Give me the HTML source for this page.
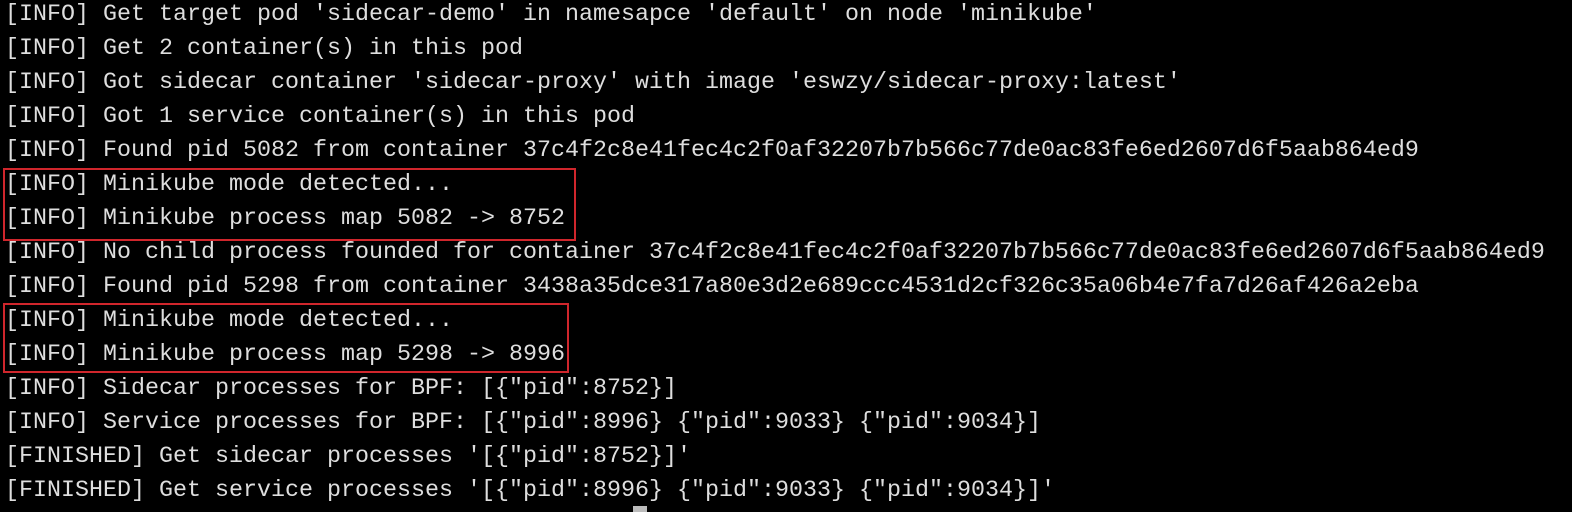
<!DOCTYPE html>
<html><head><meta charset="utf-8"><style>
html,body{margin:0;padding:0;background:#000;width:1572px;height:512px;overflow:hidden;position:relative}
pre{margin:0;position:absolute;left:5px;top:-2px;font-family:"Liberation Mono","DejaVu Sans Mono",monospace;font-size:23.33px;line-height:34px;color:#dedede;white-space:pre}
.box{position:absolute;border:2px solid #d0262c;box-sizing:border-box}
.cur{position:absolute;left:633px;top:506px;width:14px;height:6px;background:#bbb}
</style></head><body>
<pre>[INFO] Get target pod 'sidecar-demo' in namesapce 'default' on node 'minikube'
[INFO] Get 2 container(s) in this pod
[INFO] Got sidecar container 'sidecar-proxy' with image 'eswzy/sidecar-proxy:latest'
[INFO] Got 1 service container(s) in this pod
[INFO] Found pid 5082 from container 37c4f2c8e41fec4c2f0af32207b7b566c77de0ac83fe6ed2607d6f5aab864ed9
[INFO] Minikube mode detected...
[INFO] Minikube process map 5082 -&gt; 8752
[INFO] No child process founded for container 37c4f2c8e41fec4c2f0af32207b7b566c77de0ac83fe6ed2607d6f5aab864ed9
[INFO] Found pid 5298 from container 3438a35dce317a80e3d2e689ccc4531d2cf326c35a06b4e7fa7d26af426a2eba
[INFO] Minikube mode detected...
[INFO] Minikube process map 5298 -&gt; 8996
[INFO] Sidecar processes for BPF: [{"pid":8752}]
[INFO] Service processes for BPF: [{"pid":8996} {"pid":9033} {"pid":9034}]
[FINISHED] Get sidecar processes '[{"pid":8752}]'
[FINISHED] Get service processes '[{"pid":8996} {"pid":9033} {"pid":9034}]'</pre>
<div class="box" style="left:3px;top:168px;width:573px;height:73px"></div>
<div class="box" style="left:3px;top:303px;width:566px;height:70px"></div>
<div class="cur"></div>
</body></html>
